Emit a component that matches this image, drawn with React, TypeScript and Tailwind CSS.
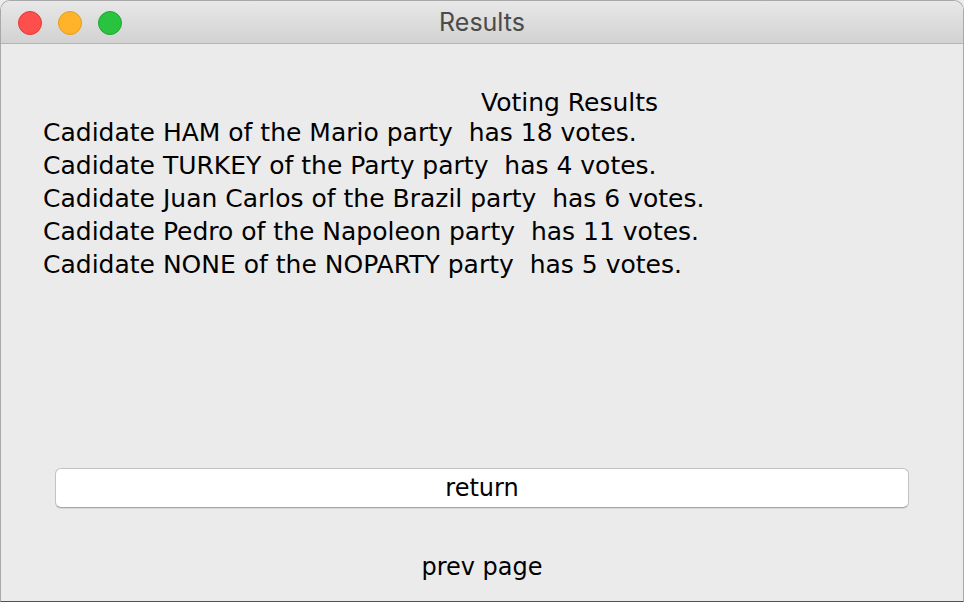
import React from 'react';

const results = [
  { name: 'HAM', party: 'Mario', votes: 18 },
  { name: 'TURKEY', party: 'Party', votes: 4 },
  { name: 'Juan Carlos', party: 'Brazil', votes: 6 },
  { name: 'Pedro', party: 'Napoleon', votes: 11 },
  { name: 'NONE', party: 'NOPARTY', votes: 5 },
];

const App: React.FC = () => {
  return (
    <div className="w-[964px] h-[602px] overflow-hidden bg-[#ececec]">
      <div className="flex flex-col w-full h-full rounded-t-[10px] border border-[#a9a9a9] border-b-[#505050] bg-[#ebebeb] overflow-hidden">
        {/* Title bar */}
        <div className="relative flex items-center h-[43px] pt-[2px] shrink-0 bg-gradient-to-b from-[#e8e8e8] to-[#d2d2d2] border-b border-[#b4b4b4]">
          <div className="flex items-center gap-[16px] pl-[17px]">
            <span className="w-[24px] h-[24px] rounded-full bg-[#fe4f4c] border border-[#e0393a]" />
            <span className="w-[24px] h-[24px] rounded-full bg-[#ffb32a] border border-[#e09e20]" />
            <span className="w-[24px] h-[24px] rounded-full bg-[#2ac33f] border border-[#1fa62f]" />
          </div>
          <div className="absolute inset-0 pt-[2px] flex items-center justify-center text-[25px] text-[#4b4b4b] font-['Inter','Liberation_Sans',sans-serif]">
            Results
          </div>
        </div>

        {/* Content */}
        <div className="flex flex-col flex-1 font-['DejaVu_Sans',sans-serif] text-[24px] leading-[33px] text-black">
          <div className="pt-[42px] pl-[480px] h-[72px] text-[25px]">Voting Results</div>
          <div className="pl-[42px] text-[25px]">
            {results.map((r) => (
              <div key={r.name} className="whitespace-pre">
                {`Cadidate ${r.name} of the ${r.party} party  has ${r.votes} votes.`}
              </div>
            ))}
          </div>

          <div className="flex-1" />

          <div className="px-[54px]">
            <button className="w-full h-[40px] bg-white rounded-[6px] border border-[#c3c3c3] border-b-[#a8a8a8] shadow-[0_1px_0_rgba(0,0,0,0.08)] text-[24px] text-black">
              return
            </button>
          </div>
          <div className="h-[93px] flex items-center justify-center pt-[25px]">prev page</div>
        </div>
      </div>
    </div>
  );
};

export default App;
